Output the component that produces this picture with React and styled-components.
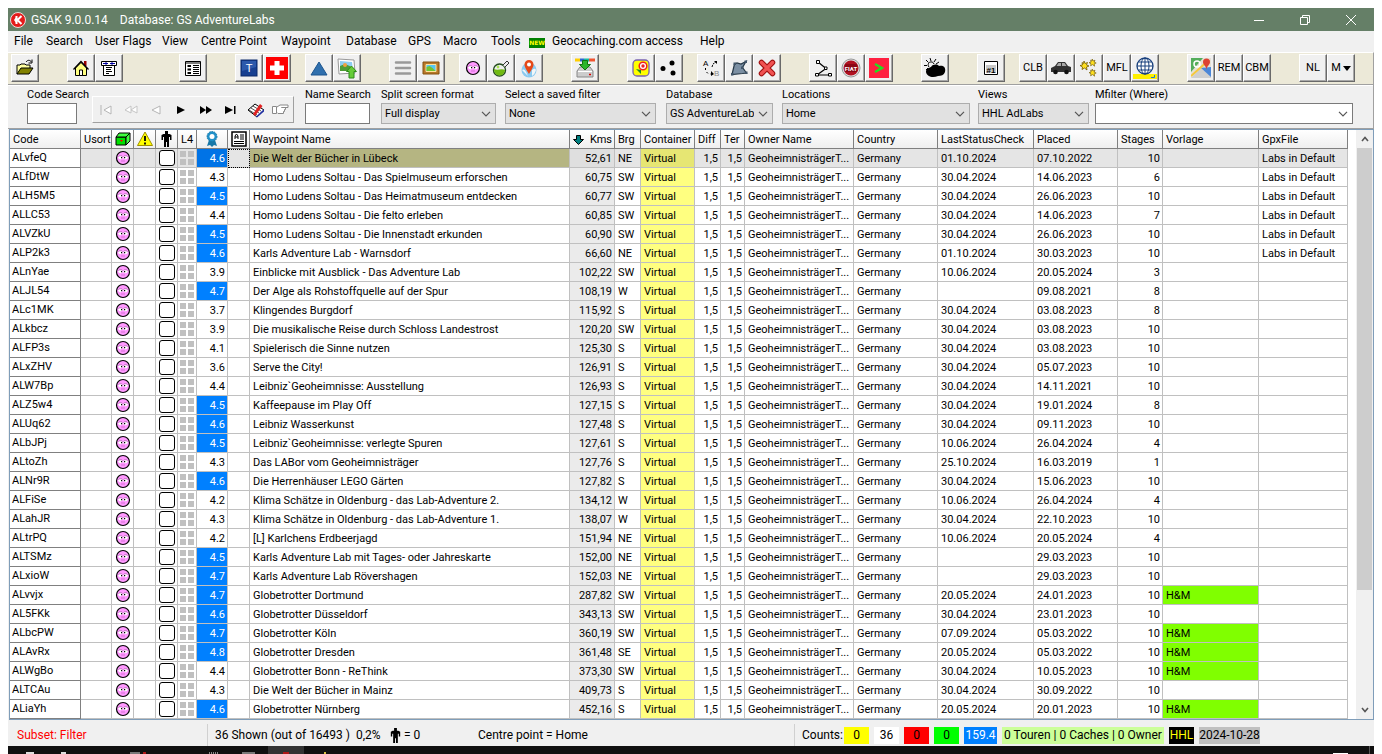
import React from "react";
import styled, { createGlobalStyle, css } from "styled-components";

const UI_FONT = 'Roboto, "Segoe UI", sans-serif';

const GlobalStyle = createGlobalStyle`
  * { box-sizing: border-box; }
  body { margin: 0; background: #fff; color: #000; font: 11px/14px ${UI_FONT}; overflow: hidden; }
  button, input, select { font: inherit; color: inherit; margin: 0; padding: 0; border: 0; background: none; border-radius: 0; }
  svg { display: block; }
`;

const Window = styled.div`
  margin: 8px 8px 0;
  display: flex;
  flex-direction: column;
  background: #f0f0f0;
`;

const TitleBar = styled.header`
  height: 23px;
  display: flex;
  align-items: center;
  background: #657f67;
  color: #fff;
  font: 12px/16px ${UI_FONT};
  padding-left: 2px;
`;
const TitleText = styled.h1`
  margin: 0 0 0 5px;
  font: inherit;
  flex: 1;
  display: flex;
  gap: 12px;
`;
const WindowButton = styled.button`
  width: 46px;
  height: 20px;
  display: grid;
  place-items: center;
`;

const MenuBar = styled.nav`
  height: 21px;
  display: flex;
  align-items: center;
  padding-bottom: 2px;
  font: 12px/16px ${UI_FONT};
`;
const MenuItem = styled.button`
  width: ${(p) => p.$w}px;
  padding-left: 6px;
  text-align: left;
  white-space: nowrap;
  display: flex;
  align-items: center;
  gap: 7px;
`;
const NewBadge = styled.span`
  width: 16px;
  height: 10px;
  margin-top: 4px;
  background: #008000;
  color: #ff0;
  font: bold 6px/10px "DejaVu Sans", sans-serif;
  text-align: center;
`;

const ToolBar = styled.div`
  height: 32px;
  display: flex;
  padding: 1px 0 2px 3px;
  background: #ece9d8;
  border-top: 1px solid #fff;
  border-right: 1px solid #a0a0a0;
`;
const ToolGroup = styled.div`
  display: flex;
  margin-right: ${(p) => p.$gap || 28}px;
`;
const ToolButton = styled.button`
  width: 28px;
  height: 28px;
  display: flex;
  align-items: center;
  justify-content: center;
  gap: 2px;
  background: #f0f0f0;
  border: 1px solid;
  border-color: #fff #696969 #696969 #fff;
  box-shadow: inset -1px -1px 0 #a8a8a8;
  white-space: nowrap;
`;

const SearchBar = styled.div`
  height: 45px;
  display: flex;
  padding: 3px 20px 0 19px;
  border: 1px solid #a0a0a0;
  border-left: 0;
  box-shadow: inset 0 1px 0 #fff;
`;
const Field = styled.label`
  display: flex;
  flex-direction: column;
  gap: 1px;
  width: ${(p) => p.$w}px;
  ${(p) => p.$grow && css`flex: 1;`}
  margin-right: ${(p) => p.$gap || 0}px;
  white-space: nowrap;
`;
const FieldName = styled.span`
  line-height: 14px;
`;
const TextBox = styled.input`
  width: 100%;
  height: 21px;
  border: 1px solid #7a7a7a;
  background: #fff;
  padding: 0 3px;
`;
const SelectBox = styled.span`
  display: grid;
  height: 21px;
  align-items: center;
  background: ${(p) => (p.$white ? "#fff" : "#e1e1e1")};
  border: 1px solid ${(p) => (p.$white ? "#7a7a7a" : "#adadad")};
  & > * { grid-area: 1 / 1; }
  & > svg { justify-self: end; margin-right: 4px; pointer-events: none; }
`;
const Select = styled.select`
  appearance: none;
  width: 100%;
  min-width: 0;
  height: 19px;
  padding: 0 18px 0 3px;
`;
const NavGroup = styled.div`
  display: flex;
  align-items: center;
  justify-content: center;
  width: 202px;
  height: 27px;
  margin: 8px 11px 0 15px;
  border: 1px solid;
  border-color: #fff #a0a0a0 #a0a0a0 #fff;
`;
const NavButton = styled.button`
  width: 25px;
  height: 24px;
  display: grid;
  place-items: center;
`;

const GridFrame = styled.main`
  display: flex;
  margin: 0 0 0 1px;
  border: 1px solid #7f9db9;
  background: #fff;
`;
const TableArea = styled.div`
  flex: 1;
  min-width: 0;
  padding-right: 8px;
`;
const Table = styled.table`
  width: 100%;
  table-layout: fixed;
  border-spacing: 0;
`;
const Head = styled.th`
  height: 19px;
  padding: 1px 2px 0 3px;
  font-weight: normal;
  text-align: left;
  white-space: nowrap;
  overflow: hidden;
  background: linear-gradient(#fff, #efefef);
  border-right: 1px solid #808080;
  border-bottom: 1px solid #808080;
`;
const IconHead = styled(Head)`
  padding: 0;
  & > svg { margin: 0 auto; }
`;
const SortHead = styled.span`
  display: flex;
  align-items: center;
  justify-content: space-between;
`;
const Cell = styled.td`
  height: 19px;
  padding: 1px ${(p) => (p.$align === "right" ? 2 : 3)}px 0;
  text-align: ${(p) => p.$align || "left"};
  white-space: nowrap;
  overflow: hidden;
  border-right: 1px solid #c0c0c0;
  border-bottom: 1px solid #c0c0c0;
  background: ${(p) => p.$bg || "transparent"};
  color: ${(p) => p.$color || "inherit"};
  & > svg { margin: 0 auto; }
`;
const CodeCell = styled(Cell)`
  padding: 0 2px 1px;
  border-color: #808080;
  background: #fff;
`;
const IconCell = styled(Cell)`
  padding: 0;
  ${(p) => p.$focus && css`outline: 1px dotted #000; outline-offset: -1px;`}
`;
const Row = styled.tr`
  background: ${(p) => (p.$selected ? "#e5e5e5" : "#fff")};
`;
const Tick = styled.input`
  appearance: none;
  display: block;
  width: 16px;
  height: 16px;
  margin: 0 auto;
  border: 1px solid #000;
  border-radius: 3px;
  background: #fff;
`;

const ScrollBar = styled.div`
  width: 17px;
  display: flex;
  flex-direction: column;
  background: #f0f0f0;
`;
const ScrollButton = styled.button`
  height: 18px;
  display: grid;
  place-items: center;
`;
const ScrollTrack = styled.div`
  flex: 1;
`;
const ScrollThumb = styled.div`
  height: 80%;
  width: 15px;
  margin: 0 auto;
  background: #cdcdcd;
`;

const StatusBar = styled.footer`
  height: 26px;
  display: flex;
  align-items: center;
  padding-top: 4px;
  font: 12px/16px ${UI_FONT};
  white-space: nowrap;
`;
const StatusPart = styled.div`
  display: flex;
  align-items: center;
  height: 22px;
  padding-left: ${(p) => p.$pad || 7}px;
  width: ${(p) => (p.$w ? p.$w + "px" : "auto")};
  ${(p) => p.$grow && css`flex: 1;`}
  ${(p) => p.$line && css`border-left: 1px solid #d0d0d0;`}
  ${(p) => p.$red && css`color: #f00;`}
`;
const CountLabel = styled.span`
  width: 42px;
`;
const Count = styled.span`
  height: 17px;
  flex: 0 0 ${(p) => p.$w}px;
  margin-right: 5px;
  text-align: center;
  background: ${(p) => p.$bg};
  color: ${(p) => p.$color || "#000"};
`;
const TaskBar = styled.div`
  height: 8px;
  display: flex;
  justify-content: space-between;
  background: #101010;
  overflow: hidden;
`;

/* ---------- icons ---------- */
const S = ({ w = 20, h = w, vb, children, ...r }) => (
  <svg width={w} height={h} viewBox={vb || `0 0 ${w} ${h}`} fill="none" aria-hidden="true" {...r}>{children}</svg>
);
const Logo = () => (
  <S w={16}><circle cx="8" cy="8" r="7.5" fill="#e41b1b" stroke="#fff" strokeWidth=".8" /><path d="M6.5 4v8M11.500 4 7.500 8l4 4" stroke="#fff" strokeWidth="2" /><path d="M6.500 4.500 4 8l2.500 3.500z" fill="#fff" /></S>
);
const Chevron = () => <S w={10} h={6}><path d="M1 .8 5 4.8 9 .8" stroke="#555" strokeWidth="1.2" /></S>;
const Pink = () => (
  <S w={16}>
    <circle cx="8" cy="8" r="6.500" fill="#ff99ff" stroke="#000" strokeWidth="1.200" />
    <ellipse cx="5.500" cy="7.500" rx="2.200" ry="1.700" fill="#fff" /><ellipse cx="10.500" cy="7.500" rx="2.200" ry="1.700" fill="#fff" />
    <path d="M3.500 6.500c1-1 3-1 4 0M8.500 6.500c1-1 3-1 4 0" stroke="#a050a0" strokeWidth=".7" />
    <path d="M6 7h1.200v1.200H6zM9 7h1.200v1.200H9z" fill="#000" />
    <path d="M6 11h4" stroke="#c060c0" strokeWidth=".7" />
  </S>
);
const Person = ({ h = 16 }) => (
  <S w={11} h={h} vb="0 0 11 16"><path d="M4 0h3v3h1.5l2 1v5H9V6H8v10H6v-5H5v5H3V6H2v3H.5V4l2-1H4z" fill="#000" /></S>
);
const Quad = () => <S w={14}><path d="M0 0h6v6H0zM8 0h6v6H8zM0 8h6v6H0zM8 8h6v6H8z" fill="#c0c0c0" /></S>;
const STAR = "m4 0 1 2.500L7.500 1.500 6.500 4 9 5 6.500 6l.5 3-2.500-2L2 8.500 2.500 6 0 4.500l2.500-.5L2 1.500l1.500 1z";

const I = {
  open: <S><path d="M2 16V7h3l1-1h4l1 1h4v3" fill="#ffffa0" stroke="#000" /><path d="M2 16 6 10h12l-4 6z" fill="#808000" stroke="#000" /><path d="M11 4c2-2.500 4-2 5.500 0M17 1.500V5h-3.500" stroke="#000" /></S>,
  home: <S><path d="M4.500 10v7.500h11V10L10 4.500z" fill="#ffff80" stroke="#000" /><path d="M13 3h2.500v5H13z" fill="#900" /><path d="m2.500 11.500 7.500-8 7.500 8" stroke="#000" strokeWidth="1.300" /><path d="M8.500 12h3v5.500h-3z" fill="#fff" stroke="#000" /></S>,
  layout: <S><path d="M3.500 3.500h13v4h-1v10h-11v-10h-1z" fill="#fff" stroke="#000" /><path d="M2.500 3.500h15v4h-15z" fill="#fff" stroke="#000" /><path d="M4 5.500h5M11 5.500h5M7 4v3M13 4v3" stroke="#0000a0" /><path d="M7 9.500h6M7 11.500h5M7 13.500h6M7 15.500h3" stroke="#000" /></S>,
  form: <S><path d="M2.500 3.500h15v14h-15z" fill="#fff" stroke="#000" /><path d="M3 5h14" stroke="#000" /><path d="M4.500 8h3.500M4.500 11.500h3.500M4.500 15h3.500" stroke="#000" strokeWidth="2" /><path d="M10 7.500h6M10 9.500h6M10 11.500h6M10 13.500h6M10 15.500h6" stroke="#000" /></S>,
  t: <S><rect x="2" y="2" width="16" height="16" fill="#173f91" stroke="#0b2868" /><path d="M3 3h14v6L3 13z" fill="#3b6abd" opacity=".6" /><text x="10" y="14" textAnchor="middle" fontSize="11" fontFamily="Liberation Sans" fill="#fff">T</text></S>,
  cross: <S w={22}><path d="M0 0h22v22H0z" fill="#f00" /><path d="M8.500 4h5v4.500H18v5h-4.500V18h-5v-4.500H4v-5h4.500z" fill="#fff" /></S>,
  tri: <S><path d="M10 4 18 17H2z" fill="#2f6fae" stroke="#1d558f" /></S>,
  picUp: <S w={22}><path d="m2 2 16 1 1 13-16 1z" fill="#fff" stroke="#999" /><path d="m4 4 12 1 .5 4H4z" fill="#8fcdf2" /><path d="m4 9 5-2 7 3v4H4z" fill="#4d9b35" /><circle cx="9" cy="8" r="2" fill="#f0a040" /><path d="m15.500 9 5 5.500H18V21h-5v-6.500h-2.500z" fill="#65cc38" stroke="#2f8b1c" /></S>,
  lines: <S><path d="M3 4.500h14M3 10h14M3 15.500h14" stroke="#999" strokeWidth="2.500" strokeLinecap="round" /></S>,
  picture: <S><path d="M2 4h16v12H2z" fill="#b87828" stroke="#835010" /><path d="M5 6.500h10v7H5z" fill="#55c5f2" stroke="#ffe29a" /><path d="M5.500 13V9l3-1 3 2 3 3z" fill="#72c332" /></S>,
  pink: <Pink />,
  flask: <S><circle cx="8.500" cy="12" r="6" fill="#eee" stroke="#244b20" strokeWidth="1.400" /><path d="M3 11c4 2 7-1 11 1a5.500 5.500 0 0 1-11 0z" fill="#71ba12" /><path d="m12 7 4-4 2 2-4 4" fill="#eee" stroke="#333" /><circle cx="7" cy="9" r="1.400" fill="#a7e652" /></S>,
  pin: <S><circle cx="10" cy="12" r="7.500" fill="#8ccaf0" /><path d="M3 12c3-2 4 2 6 6M13 12c2-1 3-2 4 0-1 3-2 5-4 6" fill="#f1f6f9" /><path d="M10 16C7 11 5.500 9 5.500 6.500a4.500 4.500 0 0 1 9 0C14.500 9 13 11 10 16z" fill="#e64918" /><circle cx="10" cy="6.500" r="2" fill="#fff" /></S>,
  download: <S w={22}><path d="M1 3h5" stroke="#ffce00" strokeWidth="3" /><path d="M6 3h4" stroke="#2c66d0" strokeWidth="3" /><path d="M10 3h5" stroke="#17b8a0" strokeWidth="3" /><path d="M15 3h6" stroke="#f05430" strokeWidth="3" /><path d="m3 14 3-4h10l3 4v6H3z" fill="#ccc" stroke="#888" /><path d="M4 14.500h14" stroke="#fff" /><path d="M8.500 3.500h5v4h3L11 13 5.500 7.500h3z" fill="#2cb52b" stroke="#12740f" /><path d="M15 17.500h2" stroke="#d00" strokeWidth="1.500" /></S>,
  filter: <S><rect x="2" y="2" width="16" height="16" rx="4" fill="#ff0" stroke="#7862b0" strokeWidth="1.300" /><circle cx="12" cy="8" r="3.800" fill="#fff" stroke="#f02020" strokeWidth="1.500" /><circle cx="12" cy="8" r="1.700" fill="#f02020" /><path d="m5 11 5 1v4z" fill="#238b23" /></S>,
  dots: <S><circle cx="4" cy="10.500" r="2.500" fill="#000" /><circle cx="13" cy="5" r="2.500" fill="#000" /><circle cx="14" cy="15" r="2.500" fill="#000" /></S>,
  ab: <S><text x="2" y="8" fontSize="8" fontFamily="Liberation Sans" fill="#000">A</text><text x="13" y="18" fontSize="8" fontFamily="Liberation Sans" fill="#888">B</text><path d="M4.500 10v2m1 2 2 2m2 0h2M11 9l1-3 3-2" stroke="#000" strokeDasharray="2 1" /><path d="m10 13 3 3-3 2zM13 3h3v3z" fill="#000" /></S>,
  poly: <S><path d="M3 16.500 5.500 6 8 5l4 1 5-2.500-3.500 6L17.500 15l-4 .5z" fill="#7b8fa3" stroke="#253746" strokeWidth="1.200" /><path d="M2 15h2.500v2.500H2zM4.500 4.500H7V7H4.500zM15.500 2.500H18V5h-2.500zM16 13.500h2.500V16H16zM12 8.500h2.500V11H12z" fill="#42566a" /></S>,
  del: <S><path d="m4.500 4.500 11 11M15.500 4.500l-11 11" stroke="#a01010" strokeWidth="5.500" strokeLinecap="round" /><path d="m4.500 4.500 11 11M15.500 4.500l-11 11" stroke="#f05252" strokeWidth="3.300" strokeLinecap="round" /></S>,
  route: <S><path d="m5 4 8 6.500-9 6.500h13" stroke="#000" strokeWidth="1.200" /><path d="M3.500 2.500h3v3h-3zM11.500 9h2.500v2.500h-2.500zM2.500 15.500h3v2.500h-3zM15.500 15.500h3v2.500h-3z" fill="#fff" stroke="#000" /></S>,
  fiat: <S w={20}><circle cx="10" cy="10" r="9" fill="#ddd" stroke="#999" /><circle cx="10" cy="10" r="7.500" fill="#b01020" /><rect x="4" y="6" width="12" height="8" fill="#8b0715" /><text x="10" y="12.500" textAnchor="middle" fontSize="6" fontWeight="bold" fontFamily="Roboto" fill="#fff">FIAT</text></S>,
  gt: <S w={20}><path d="M0 0h20v20H0z" fill="#ff2040" /><path d="m6 6 7 4-7 4" stroke="#20e020" strokeWidth="2.400" /></S>,
  weather: <S w={22}><path d="m6 1 1 3M2 3l2.500 2.500M0 8.500h3M12 2l-2 3M2 13l2-2M15 5l-3 2" stroke="#000" /><path d="M5 10a3 3 0 1 1 5-3" stroke="#000" /><path d="M2 15c0-4 3-4 5-5 2-3 6-3 8-1 5-1 7 2 6 6-1 3-4 4-7 4-5 2-11 1-12-4z" fill="#000" /></S>,
  num: <S><path d="M3.500 3.500h13v13h-13z" fill="#fff" stroke="#000" /><path d="M5 7h10v8H5z" fill="#c8c8c8" /><text x="10" y="14.500" textAnchor="middle" fontSize="8" fontWeight="bold" fontFamily="Liberation Sans" fill="#000">#1</text></S>,
  car: <S w={22} h={16}><path d="M1 12V8l4-2 3-4h7l3 4 3 1v5z" fill="#333" /><path d="M8.500 3H11v3H6.500zM12 3h2.500L16.500 6H12z" fill="#aaa" /><circle cx="5.500" cy="12" r="2.300" fill="#111" /><circle cx="16.500" cy="12" r="2.300" fill="#111" /></S>,
  stars: <S w={20}><g fill="#ffe020" stroke="#705800" strokeWidth=".8"><path d={STAR} transform="translate(1 3)" /><path d={STAR} transform="translate(10 1) scale(.8)" /><path d={STAR} transform="translate(10 11) scale(.8)" /></g></S>,
  globe: <S w={24} h={22}><path d="M0 17h24v5H0z" fill="#fff000" /><circle cx="12" cy="9" r="8" fill="#fff" stroke="#173f7c" strokeWidth="1.300" /><path d="M12 1v16M4 9h16M5.500 5h13M5.500 13h13" stroke="#173f7c" /><ellipse cx="12" cy="9" rx="4" ry="8" stroke="#173f7c" /><path d="M18 20.500h3.500V18" stroke="#1878e0" /></S>,
  map: <S w={20}><path d="M0 0h20v20H0z" fill="#e5e0d5" /><path d="M0 0h12L0 14z" fill="#54ad5b" /><path d="M0 20 12 8l8 8v4z" fill="#cfcfcf" /><path d="m10 10 10 9V9z" fill="#4b86d8" /><path d="M0 18 18 2" stroke="#f5c83c" strokeWidth="2" /><circle cx="6" cy="6" r="3" stroke="#fff" strokeWidth="1.500" /><path d="M15.500 12c0-4-3.500-5-3.500-8a3.500 3.500 0 0 1 7 0c0 3-3.500 4-3.500 8z" fill="#dc4132" /></S>,
};

const TOOLS = [
  { gap: 28, items: ["open"] },
  { gap: 56, items: ["home", "layout"] },
  { gap: 28, items: ["form"] },
  { gap: 14, items: ["t", "cross"] },
  { gap: 28, items: ["tri", "picUp"] },
  { gap: 14, items: ["lines", "picture"] },
  { gap: 28, items: ["pink", "flask", "pin"] },
  { gap: 28, items: ["download"] },
  { gap: 14, items: ["filter", "dots"] },
  { gap: 28, items: ["ab", "poly", "del"] },
  { gap: 28, items: ["route", "fiat", "gt"] },
  { gap: 28, items: ["weather"] },
  { gap: 14, items: ["num"] },
  { gap: 28, items: ["CLB", "car", "stars", "MFL", "globe"] },
  { gap: 28, items: ["map", "REM", "CBM"] },
  { gap: 14, items: ["NL", "M"] },
];

const MENU = [["File", 32], ["Search", 49], ["User Flags", 67], ["View", 39], ["Centre Point", 80], ["Waypoint", 65], ["Database", 62], ["GPS", 35], ["Macro", 48], ["Tools", 38], ["Geocaching.com access", 171, true], ["Help", 40]];

const NAV = [
  ["First", <S w={12} h={10}><path d="M1 0v10M11 1v8L4 5z" stroke="#b5b5b5" fill="#fff" /></S>],
  ["Page back", <S w={14} h={10}><path d="M7 1v7L1 5zM13 1v7L7 5z" stroke="#c5c5c5" fill="#fff" /></S>],
  ["Previous", <S w={10}><path d="M9 1v8L1 5z" stroke="#b5b5b5" fill="#fff" /></S>],
  ["Next", <S w={8} h={8}><path d="M0 0v8l8-4z" fill="#000" /></S>],
  ["Page forward", <S w={12} h={8}><path d="M0 0v8l6-4zM6 0v8l6-4z" fill="#000" /></S>],
  ["Last", <S w={11} h={8}><path d="M0 0v8l8-4zM9 0h1.500v8H9z" fill="#000" /></S>],
  ["Find", <S w={18} h={16}><path d="m1 8 7-6 9 6-7 7z" fill="#fff" stroke="#000" /><path d="m2 8 8 5M4 6l8 5M6 4l8 5" stroke="#222" strokeWidth=".8" /><path d="m6 12 7-10 2.500 2L8 14z" fill="#e02020" /><path d="M9 14.500 17 7v2.500l-7 6z" fill="#2030a0" /></S>],
  ["Go to", <S w={17} h={13}><path d="M.5 3.500h4v7h-4zM5 4l3-2h8v2.500H9.500h4v2h-1v2h-1v2H6L5 9.500" stroke="#888" fill="#fff" /></S>],
];

const COLS = [71, 31, 22, 22, 22, 19, 31, 22, null, 45, 26, 54, 26, 24, 109, 84, 96, 84, 45, 96, 89];

const ROWS = `ALvfeQ|4.6|Die Welt der Bücher in Lübeck|52,61|NE|01.10.2024|07.10.2022|10||L
ALfDtW|4.3|Homo Ludens Soltau - Das Spielmuseum erforschen|60,75|SW|30.04.2024|14.06.2023|6||L
ALH5M5|4.5|Homo Ludens Soltau - Das Heimatmuseum entdecken|60,77|SW|30.04.2024|26.06.2023|10||L
ALLC53|4.4|Homo Ludens Soltau - Die felto erleben|60,85|SW|30.04.2024|14.06.2023|7||L
ALVZkU|4.5|Homo Ludens Soltau - Die Innenstadt erkunden|60,90|SW|30.04.2024|26.06.2023|10||L
ALP2k3|4.6|Karls Adventure Lab - Warnsdorf|66,60|NE|01.10.2024|30.03.2023|10||L
ALnYae|3.9|Einblicke mit Ausblick - Das Adventure Lab|102,22|SW|10.06.2024|20.05.2024|3||
ALJL54|4.7|Der Alge als Rohstoffquelle auf der Spur|108,19|W||09.08.2021|8||
ALc1MK|3.7|Klingendes Burgdorf|115,92|S|30.04.2024|03.08.2023|8||
ALkbcz|3.9|Die musikalische Reise durch Schloss Landestrost|120,20|SW|30.04.2024|03.08.2023|10||
ALFP3s|4.1|Spielerisch die Sinne nutzen|125,30|S|30.04.2024|03.08.2023|10||
ALxZHV|3.6|Serve the City!|126,91|S|30.04.2024|05.07.2023|10||
ALW7Bp|4.4|Leibniz\`Geoheimnisse: Ausstellung|126,93|S|30.04.2024|14.11.2021|10||
ALZ5w4|4.5|Kaffeepause im Play Off|127,15|S|30.04.2024|19.01.2024|8||
ALUq62|4.6|Leibniz Wasserkunst|127,48|S|30.04.2024|09.11.2023|10||
ALbJPj|4.5|Leibniz\`Geoheimnisse: verlegte Spuren|127,61|S|10.06.2024|26.04.2024|4||
ALtoZh|4.3|Das LABor vom Geoheimnisträger|127,76|S|25.10.2024|16.03.2019|1||
ALNr9R|4.6|Die Herrenhäuser LEGO Gärten|127,82|S|30.04.2024|15.06.2023|10||
ALFiSe|4.2|Klima Schätze in Oldenburg - das Lab-Adventure 2.|134,12|W|10.06.2024|26.04.2024|4||
ALahJR|4.3|Klima Schätze in Oldenburg - das Lab-Adventure 1.|138,07|W|30.04.2024|22.10.2023|10||
ALtrPQ|4.2|[L] Karlchens Erdbeerjagd|151,94|NE|10.06.2024|20.05.2024|4||
ALTSMz|4.5|Karls Adventure Lab mit Tages- oder Jahreskarte|152,00|NE||29.03.2023|10||
ALxioW|4.7|Karls Adventure Lab Rövershagen|152,03|NE||29.03.2023|10||
ALvvjx|4.7|Globetrotter Dortmund|287,82|SW|20.05.2024|24.01.2023|10|H&M|
AL5FKk|4.6|Globetrotter Düsseldorf|343,13|SW|30.04.2024|23.01.2023|10||
ALbcPW|4.7|Globetrotter Köln|360,19|SW|07.09.2024|05.03.2022|10|H&M|
ALAvRx|4.8|Globetrotter Dresden|361,48|SE|20.05.2024|05.03.2022|10|H&M|
ALWgBo|4.4|Globetrotter Bonn - ReThink|373,30|SW|30.04.2024|10.05.2023|10|H&M|
ALTCAu|4.3|Die Welt der Bücher in Mainz|409,73|S|30.04.2024|30.09.2022|10||
ALiaYh|4.6|Globetrotter Nürnberg|452,16|S|20.05.2024|20.01.2023|10|H&M|`.split("\n").map((l) => l.split("|"));

function Combo({ name, value, w, gap, grow, white }) {
  return (
    <Field $w={w} $gap={gap} $grow={grow}>
      <FieldName>{name}</FieldName>
      <SelectBox $white={white}>
        <Select defaultValue={value}><option>{value}</option></Select>
        <Chevron />
      </SelectBox>
    </Field>
  );
}

function DataRow({ row, selected }) {
  const [code, rating, name, km, brg, check, placed, stages, vorlage, gpx] = row;
  const high = Number(rating) >= 4.5;
  return (
    <Row $selected={selected}>
      <CodeCell>{code}</CodeCell>
      <Cell />
      <IconCell><Pink /></IconCell>
      <Cell />
      <IconCell><Tick type="checkbox" aria-label={code} /></IconCell>
      <IconCell><Quad /></IconCell>
      <Cell $align="right" $bg={high && (selected ? "#0073e6" : "#0080ff")} $color={high && "#fff"}>{rating}</Cell>
      <IconCell $focus={selected} />
      <Cell $bg={selected && "#b5b582"}>{name}</Cell>
      <Cell $align="right" $bg={selected ? "#dfdfdf" : "#ebebeb"}>{km}</Cell>
      <Cell>{brg}</Cell>
      <Cell $bg={selected ? "#e6e673" : "#ffff80"}>Virtual</Cell>
      <Cell $align="right">1,5</Cell>
      <Cell $align="right">1,5</Cell>
      <Cell>GeoheimnisträgerT...</Cell>
      <Cell>Germany</Cell>
      <Cell>{check}</Cell>
      <Cell>{placed}</Cell>
      <Cell $align="right">{stages}</Cell>
      <Cell $bg={vorlage && "#80ff00"}>{vorlage}</Cell>
      <Cell>{gpx && "Labs in Default"}</Cell>
    </Row>
  );
}

export default function App() {
  return (
    <>
      <GlobalStyle />
      <Window>
        <TitleBar>
          <Logo />
          <TitleText><span>GSAK 9.0.0.14</span><span>Database: GS AdventureLabs</span></TitleText>
          <WindowButton aria-label="Minimize"><S w={10}><path d="M0 5.500h10" stroke="#fff" /></S></WindowButton>
          <WindowButton aria-label="Restore"><S w={10}><path d="M.5 2.500h7v7h-7zM2.500 2.500v-2h7v7h-2" stroke="#fff" /></S></WindowButton>
          <WindowButton aria-label="Close"><S w={10}><path d="m0 0 10 10M10 0 0 10" stroke="#fff" /></S></WindowButton>
        </TitleBar>
        <MenuBar>
          {MENU.map(([t, w, isNew]) => (
            <MenuItem key={t} $w={w}>{isNew && <NewBadge>NEW</NewBadge>}{t}</MenuItem>
          ))}
        </MenuBar>
        <ToolBar>
          {TOOLS.map((g, i) => (
            <ToolGroup key={i} $gap={g.gap}>
              {g.items.map((k) => (
                <ToolButton key={k} aria-label={k}>
                  {I[k] || k}
                  {k === "M" && <S w={8} h={5}><path d="M0 0h8L4 5z" fill="#000" /></S>}
                </ToolButton>
              ))}
            </ToolGroup>
          ))}
        </ToolBar>
        <SearchBar>
          <Field $w={50}><FieldName>Code Search</FieldName><TextBox /></Field>
          <NavGroup>{NAV.map(([t, ic]) => <NavButton key={t} aria-label={t}>{ic}</NavButton>)}</NavGroup>
          <Field $w={65} $gap={11}><FieldName>Name Search</FieldName><TextBox /></Field>
          <Combo name="Split screen format" value="Full display" w={115} gap={9} />
          <Combo name="Select a saved filter" value="None" w={151} gap={10} />
          <Combo name="Database" value="GS AdventureLabs" w={107} gap={9} />
          <Combo name="Locations" value="Home" w={188} gap={8} />
          <Combo name="Views" value="HHL AdLabs" w={111} gap={6} />
          <Combo name="Mfilter (Where)" value="" grow white />
        </SearchBar>
        <GridFrame>
          <TableArea>
            <Table>
              <colgroup>{COLS.map((w, i) => <col key={i} width={w || undefined} />)}</colgroup>
              <thead>
                <tr>
                  <Head>Code</Head>
                  <Head>Usort</Head>
                  <IconHead aria-label="Type"><S w={16} h={14}><path d="M1 5h10v8H1z" fill="#00e000" stroke="#000" /><path d="m1 5 3-4h11l-4 4zM11 5l4-4v8l-4 4z" fill="#40ff40" stroke="#000" /><path d="M5 8h3l-1.500 2z" fill="#f00" /></S></IconHead>
                  <IconHead aria-label="Status"><S w={16}><path d="M8 1 15.500 14.500H.5z" fill="#ff0" stroke="#a09000" /><path d="M8 5v5M8 11.500v2" stroke="#000" strokeWidth="1.800" /></S></IconHead>
                  <IconHead aria-label="User"><Person h={16} /></IconHead>
                  <Head>L4</Head>
                  <IconHead aria-label="Favourites"><S w={14} h={16}><path d="m4 9-2 6 3-1 2 2 2-2 3 1-2-6z" fill="#1878a8" /><circle cx="7" cy="5.500" r="5" fill="#2090c8" stroke="#1878a8" strokeDasharray="1.500 1" /><circle cx="7" cy="5.500" r="2.500" fill="#fff" /></S></IconHead>
                  <IconHead aria-label="Notes"><S w={16}><path d="M1 1h14v14H1z" fill="#fff" stroke="#000" strokeWidth="1.500" /><path d="M4 8V5l1.500-2L7 5v3M4 6h3M9 4h4M9 6h4M9 8h4M3 10.500h10M3 12.500h10" stroke="#000" /></S></IconHead>
                  <Head>Waypoint Name</Head>
                  <Head><SortHead><S w={11} h={10}><path d="M3.500.5h4v4h3l-5 5-5-5h3z" fill="#008080" stroke="#000" /></S>Kms</SortHead></Head>
                  <Head>Brg</Head>
                  <Head>Container</Head>
                  <Head>Diff</Head>
                  <Head>Ter</Head>
                  <Head>Owner Name</Head>
                  <Head>Country</Head>
                  <Head>LastStatusCheck</Head>
                  <Head>Placed</Head>
                  <Head>Stages</Head>
                  <Head>Vorlage</Head>
                  <Head>GpxFile</Head>
                </tr>
              </thead>
              <tbody>{ROWS.map((r, i) => <DataRow key={r[0]} row={r} selected={i === 0} />)}</tbody>
            </Table>
          </TableArea>
          <ScrollBar>
            <ScrollButton aria-label="Scroll up"><S w={8} h={6}><path d="m1 5 3-3.500L7 5" stroke="#555" strokeWidth="1.600" /></S></ScrollButton>
            <ScrollTrack><ScrollThumb /></ScrollTrack>
            <ScrollButton aria-label="Scroll down"><S w={8} h={6}><path d="m1 1 3 3.500L7 1" stroke="#555" strokeWidth="1.600" /></S></ScrollButton>
          </ScrollBar>
        </GridFrame>
        <StatusBar>
          <StatusPart $w={199} $pad={9} $red>Subset: Filter</StatusPart>
          <StatusPart $w={176} $line>36 Shown (out of 16493 )&nbsp; 0,2%</StatusPart>
          <StatusPart $w={88}><Person h={15} />&nbsp;= 0</StatusPart>
          <StatusPart $grow>Centre point = Home</StatusPart>
          <StatusPart $w={580} $line>
            <CountLabel>Counts:</CountLabel>
            <Count $w={25} $bg="#ff0">0</Count>
            <Count $w={25} $bg="#fff">36</Count>
            <Count $w={25} $bg="#f00">0</Count>
            <Count $w={25} $bg="#0f0">0</Count>
            <Count $w={33} $bg="#0080ff" $color="#fff">159.4</Count>
            <Count $w={162} $bg="#ccff99">0 Touren | 0 Caches | 0 Owner</Count>
            <Count $w={25} $bg="#000" $color="#ff0">HHL</Count>
            <Count $w={61} $bg="#c0c0c0">2024-10-28</Count>
          </StatusPart>
        </StatusBar>
        <TaskBar>
          <S w={330} h={8}>
            <path d="M260 0h36v8h-36z" fill="#333" />
            <path d="M18 7h8M53 7h5" stroke="#ddd" strokeWidth="2" />
            <path d="M122 7h10M234 7h13" stroke="#777" strokeWidth="2" />
            <path d="M201 7h9" stroke="#888" strokeWidth="2" strokeDasharray="1 1" />
            <path d="M135 7h3M275 7h6" stroke="#b01818" strokeWidth="2" />
            <path d="M316 7h2" stroke="#d8c040" strokeWidth="2" />
          </S>
          <S w={50} h={8}><path d="M9 7.500h15" stroke="#fff" /><path d="M45.500 0v8" stroke="#555" /></S>
        </TaskBar>
      </Window>
    </>
  );
}
